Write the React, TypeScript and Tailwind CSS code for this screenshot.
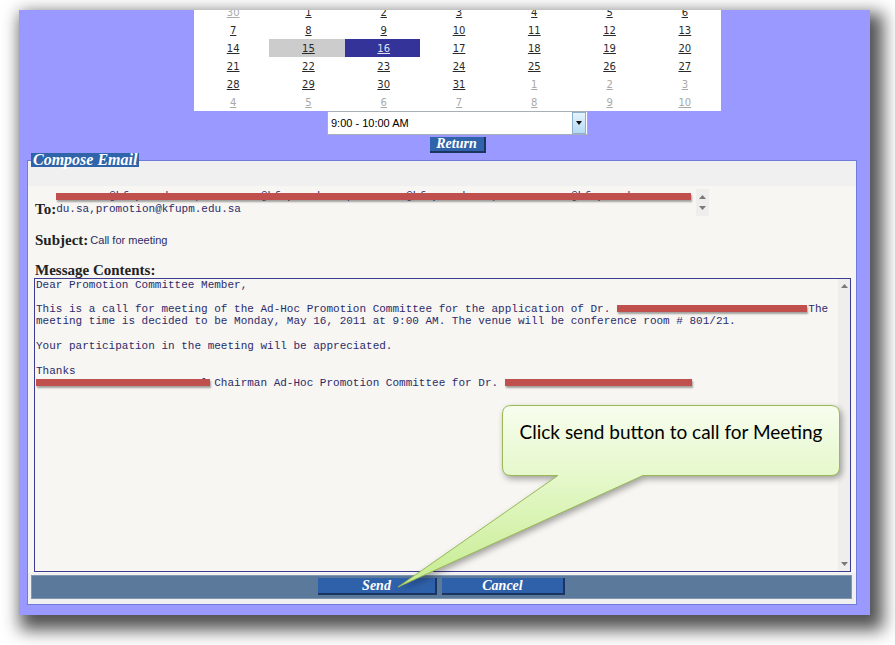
import React from "react";

type Day = { n: number; other?: boolean };

const rows: Day[][] = [
  [{ n: 30, other: true }, { n: 1 }, { n: 2 }, { n: 3 }, { n: 4 }, { n: 5 }, { n: 6 }],
  [{ n: 7 }, { n: 8 }, { n: 9 }, { n: 10 }, { n: 11 }, { n: 12 }, { n: 13 }],
  [{ n: 14 }, { n: 15 }, { n: 16 }, { n: 17 }, { n: 18 }, { n: 19 }, { n: 20 }],
  [{ n: 21 }, { n: 22 }, { n: 23 }, { n: 24 }, { n: 25 }, { n: 26 }, { n: 27 }],
  [{ n: 28 }, { n: 29 }, { n: 30 }, { n: 31 }, { n: 1, other: true }, { n: 2, other: true }, { n: 3, other: true }],
  [{ n: 4, other: true }, { n: 5, other: true }, { n: 6, other: true }, { n: 7, other: true }, { n: 8, other: true }, { n: 9, other: true }, { n: 10, other: true }],
];

function Redacted({ text, w }: { text: string; w: number }) {
  return (
    <span className="relative inline-block">
      {text}
      <span
        className="absolute left-0 top-[2px] h-[7px] bg-[#c0504d] shadow-[1px_2px_2px_rgba(0,0,0,0.35)]"
        style={{ width: w }}
      />
    </span>
  );
}

function Arrow({ up }: { up?: boolean }) {
  return (
    <svg width="7" height="4" viewBox="0 0 7 4">
      {up ? <polygon points="0,4 7,4 3.5,0" fill="#7a7a7a" /> : <polygon points="0,0 7,0 3.5,4" fill="#7a7a7a" />}
    </svg>
  );
}

export default function App() {
  return (
    <div className="relative w-[895px] h-[645px] bg-white overflow-hidden pl-[19px] pt-[10px]">
      <div className="w-[851px] h-[605px] bg-[#9999ff] shadow-[7px_9px_16px_6px_rgba(0,0,0,0.68)] flex flex-col">
        {/* calendar + time + return */}
        <div className="ml-[175px] w-[527px] flex flex-col items-center">
          <div className="w-full h-[101px] overflow-hidden bg-white">
            <div className="-mt-[7px] grid grid-cols-7 font-['DejaVu_Sans',sans-serif] text-[10px]">
              {rows.map((r, ri) =>
                r.map((d, ci) => {
                  const sel15 = ri === 2 && ci === 1;
                  const sel16 = ri === 2 && ci === 2;
                  return (
                    <div
                      key={`${ri}-${ci}`}
                      className={
                        "h-[18px] pl-[3px] flex items-center justify-center underline " +
                        (sel15
                          ? "bg-[#cccccc] text-[#2a2a2a]"
                          : sel16
                          ? "bg-[#333399] text-[#e0e0f0]"
                          : d.other
                          ? "text-[#a9a9a9]"
                          : "text-[#2a2a2a]")
                      }
                    >
                      {d.n}
                    </div>
                  );
                })
              )}
            </div>
          </div>
          <div className="w-[261px] h-[24px] border border-[#a9afb8] bg-white flex items-center">
            <div className="flex-1 pl-[3px] text-[11px] text-black font-['Liberation_Sans',Arial,sans-serif]">
              9:00 - 10:00 AM
            </div>
            <div className="w-[14px] h-[22px] mr-px border border-[#8cb0cf] bg-gradient-to-b from-[#e6f3fc] to-[#b5daf3] flex items-center justify-center">
              <svg width="6" height="4" viewBox="0 0 6 4">
                <polygon points="0,0 6,0 3,4" fill="#111" />
              </svg>
            </div>
          </div>
          <div className="mt-[2px] w-[56px] h-[16px] bg-[#3163ab] border-r-2 border-b-2 border-[#1c3560] flex items-center justify-center text-white font-bold italic text-[14px] leading-none font-['Liberation_Serif',serif]">
            Return
          </div>
        </div>

        {/* compose fieldset */}
        <fieldset className="ml-[8px] w-[830px] border border-[#6f7cd8] bg-[#f0f0f0] px-0">
          <legend className="ml-[3px] px-[2px] bg-[#3064aa] text-white font-bold italic text-[16px] leading-[14px] font-['Liberation_Serif',serif]">
            Compose Email
          </legend>
          <div className="h-[19px]" />
          <div className="bg-[#f7f6f2] pb-px">
            {/* To */}
            <div className="flex items-end pl-[7px] pt-[3px]">
              <div className="text-[15px] leading-[16px] font-bold text-[#222] font-['Liberation_Serif',serif]">To:</div>
              <div className="flex w-[653px] h-[28px]">
                <div className="flex-1 pt-px text-[11px] leading-[13px] text-[#2b2b6b] font-['Liberation_Mono',monospace] whitespace-pre overflow-hidden">
                  <div className="relative">
                    <span className="text-[#2b2b6b]">
                      {" xxxxxxx@kfupm.edu.sa,xxxxxxxxx@kfupm.edu.sa,xxxxxxxx@kfupm.edu.sa,xxxxxxxxxxx@kfupm.edu.sa"}
                    </span>
                    <span className="absolute left-0 top-[3px] h-[7px] w-[635px] bg-[#c0504d] shadow-[1px_2px_2px_rgba(0,0,0,0.35)]" />
                  </div>
                  <div>du.sa,promotion@kfupm.edu.sa</div>
                </div>
                <div className="w-[13px] h-[27px] bg-[#efeeec] flex flex-col items-center justify-around py-[2px]">
                  <Arrow up />
                  <Arrow />
                </div>
              </div>
            </div>

            {/* Subject */}
            <div className="mt-[15px] flex items-center pl-[7px]">
              <div className="text-[15px] leading-[16px] font-bold text-[#222] font-['Liberation_Serif',serif]">Subject:</div>
              <div className="ml-[2px] text-[11px] text-[#2b2b66] font-['Liberation_Sans',Arial,sans-serif]">Call for meeting</div>
            </div>

            {/* Message Contents */}
            <div className="mt-[13px] pl-[7px] text-[15px] leading-[16px] font-bold text-[#222] font-['Liberation_Serif',serif]">
              Message Contents:
            </div>
            <div className="ml-[6px] w-[817px] h-[294px] border border-[#3d3d8f] bg-[#f7f6f2] flex">
              <div className="flex-1 pl-px text-[11px] leading-[12.3px] text-[#2b2b6b] font-['Liberation_Mono',monospace] whitespace-pre">
                <div>Dear Promotion Committee Member,</div>
                <div>{" "}</div>
                <div>
                  {"This is a call for meeting of the Ad-Hoc Promotion Committee for the application of Dr. "}
                  <Redacted text="Xxxxxxx Xxxxxx Xxxxxxxx Xxxx" w={190} />
                  {" The"}
                </div>
                <div>meeting time is decided to be Monday, May 16, 2011 at 9:00 AM. The venue will be conference room # 801/21.</div>
                <div>{" "}</div>
                <div>Your participation in the meeting will be appreciated.</div>
                <div>{" "}</div>
                <div>Thanks</div>
                <div>
                  <Redacted text="Xx Xxxxxxxx Xxxxxx Xxxxxx" w={174} />
                  {"l Chairman Ad-Hoc Promotion Committee for Dr. "}
                  <Redacted text="Xxxxxxx Xxxxxx Xxxxxxxx Xxx" w={187} />
                </div>
              </div>
              <div className="w-[12px] bg-[#efeeec] flex flex-col items-center justify-between py-[5px]">
                <Arrow up />
                <Arrow />
              </div>
            </div>
          </div>
          <div className="mt-[2px] ml-[3px] w-[821px] h-[24px] bg-[#5b7a9b] border border-[#8197ae] flex items-center justify-center gap-[5px]">
            <div className="w-[119px] h-[17px] bg-[#2f61ab] border-r-2 border-b-2 border-[#1c3560] flex items-center justify-center text-white font-bold italic text-[14px] leading-none font-['Liberation_Serif',serif]">
              Send
            </div>
            <div className="w-[123px] h-[17px] bg-[#2f61ab] border-r-2 border-b-2 border-[#1c3560] flex items-center justify-center text-white font-bold italic text-[14px] leading-none font-['Liberation_Serif',serif]">
              Cancel
            </div>
          </div>
          <div className="h-[5px]" />
        </fieldset>
      </div>

      {/* callout */}
      <svg
        className="absolute left-0 top-0 pointer-events-none drop-shadow-[2px_3px_3px_rgba(0,0,0,0.35)]"
        width="895"
        height="645"
        viewBox="0 0 895 645"
      >
        <defs>
          <linearGradient id="cg" x1="0" y1="405" x2="0" y2="587" gradientUnits="userSpaceOnUse">
            <stop offset="0" stopColor="#f8fdee" />
            <stop offset="0.39" stopColor="#e5f8cb" />
            <stop offset="1" stopColor="#c6ec90" />
          </linearGradient>
        </defs>
        <path
          d="M 511 405.5 L 831 405.5 Q 839.5 405.5 839.5 414 L 839.5 467 Q 839.5 475.5 831 475.5 L 643 475.5 L 398 587 L 558 475.5 L 511 475.5 Q 502.5 475.5 502.5 467 L 502.5 414 Q 502.5 405.5 511 405.5 Z"
          fill="url(#cg)"
          stroke="#98b954"
          strokeWidth="1"
        />
      </svg>
      <div className="absolute left-[502px] top-[405px] w-[338px] pt-[15px] text-center text-[19px] leading-[24px] text-black font-['Lato',sans-serif]">
        Click send button to call for Meeting
      </div>
    </div>
  );
}
